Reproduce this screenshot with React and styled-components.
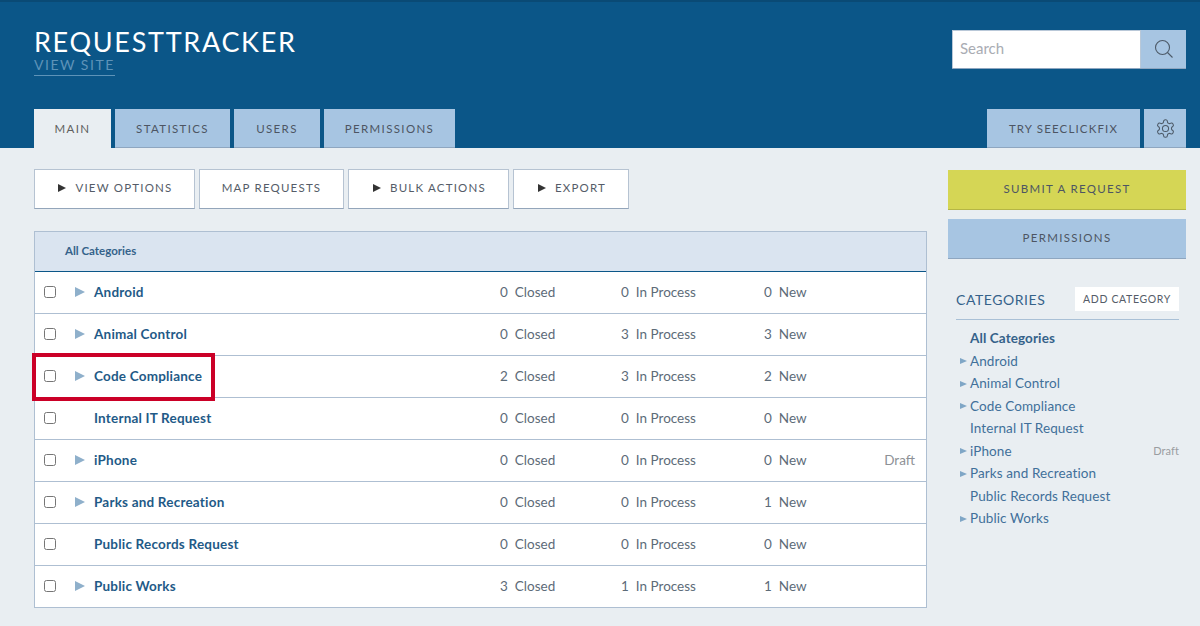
import React from 'react';
import styled, { createGlobalStyle } from 'styled-components';

const GlobalStyle = createGlobalStyle`
  html, body {
    margin: 0;
    padding: 0;
    background: #e9eef2;
    font-family: 'Lato', 'Open Sans', sans-serif;
  }
  * { box-sizing: border-box; }
`;

const Page = styled.div`
  width: 1200px;
  height: 626px;
  overflow: hidden;
`;

const Header = styled.header`
  height: 148px;
  padding: 0 14px 0 34px;
  background: #0b5688;
  border-top: 2px solid #0a4a75;
  display: flex;
  flex-direction: column;
  justify-content: space-between;
`;

const HeaderTop = styled.div`
  display: flex;
  justify-content: space-between;
  align-items: flex-start;
  padding-top: 27px;
`;

const Brand = styled.div`
  display: flex;
  flex-direction: column;
  align-items: flex-start;
`;

const Title = styled.h1`
  margin: 0;
  font-size: 27px;
  line-height: 26px;
  font-weight: 400;
  letter-spacing: 1.7px;
  color: #fff;
`;

const ViewSite = styled.a`
  font-size: 14px;
  line-height: 20px;
  letter-spacing: 1.5px;
  color: #5e93b8;
  border-bottom: 1px solid #5e93b8;
`;

const SearchBox = styled.div`
  width: 234px;
  height: 39px;
  margin-top: 1px;
  display: flex;
  border-bottom: 1px solid #8ea6c0;
`;

const SearchField = styled.div`
  flex: 1;
  padding-left: 7px;
  background: #fff;
  border: 1px solid #b9c8d8;
  border-bottom: none;
  font-size: 15px;
  line-height: 35px;
  color: #a9acb3;
`;

const SearchButton = styled.div`
  width: 45px;
  background: #a7c5e2;
  display: flex;
  align-items: center;
  justify-content: center;
`;

const TabBar = styled.nav`
  display: flex;
  justify-content: space-between;
`;

const TabGroup = styled.div`
  display: flex;
  gap: 4px;
`;

const Tab = styled.div`
  width: ${p => p.$w}px;
  height: 39px;
  display: flex;
  align-items: center;
  justify-content: center;
  font-size: 11.5px;
  letter-spacing: ${p => p.$spacing || 1.35}px;
  color: ${p => (p.$active ? '#5f5f5f' : '#4d5563')};
  background: ${p => (p.$active ? '#e9eef2' : '#a7c5e2')};
  border-bottom: ${p => (p.$active ? 'none' : '1px solid #8ea6c0')};
`;

const Content = styled.main`
  display: flex;
  padding: 21px 14px 0 34px;
`;

const MainColumn = styled.section`
  width: 893px;
`;

const Toolbar = styled.div`
  display: flex;
  gap: 4px;
  margin-bottom: 22px;
`;

const ToolButton = styled.div`
  width: ${p => p.$w}px;
  height: 40px;
  padding: 0 0 3px ${p => (p.$arrow ? 2 : 0)}px;
  display: flex;
  align-items: center;
  justify-content: center;
  gap: 9px;
  background: #fff;
  border: 1px solid #b6c3d2;
  border-bottom-color: #93a5ba;
  font-size: 11.5px;
  letter-spacing: 1.2px;
  color: #555c68;
`;

const ToolArrow = styled.span`
  width: 0;
  height: 0;
  margin-top: 1px;
  border-left: 8px solid #333;
  border-top: 4px solid transparent;
  border-bottom: 4px solid transparent;
`;

const Table = styled.div`
  background: #fff;
  border: 1px solid #aebfd2;
`;

const TableHead = styled.div`
  height: 40px;
  padding-left: 30px;
  background: #dae4f0;
  border-bottom: 1px solid #0b5688;
  font-size: 11.5px;
  font-weight: 700;
  line-height: 38px;
  color: #35628a;
`;

const Row = styled.div`
  position: relative;
  height: 42px;
  padding-bottom: 2px;
  display: flex;
  align-items: center;
  border-bottom: 1px solid #aebfd2;
  font-size: 13.5px;
  &:last-child {
    height: 41px;
    border-bottom: none;
  }
`;

const CheckCell = styled.div`
  width: 40px;
  padding-left: 9px;
  display: flex;
  align-items: center;
`;

const Check = styled.input`
  margin: 0;
  width: 12px;
  height: 12px;
`;

const ArrowCell = styled.div`
  width: 19px;
  display: flex;
  align-items: center;
`;

const RowArrow = styled.span`
  width: 0;
  height: 0;
  border-left: 10px solid #8fb0cb;
  border-top: 5px solid transparent;
  border-bottom: 5px solid transparent;
`;

const Name = styled.div`
  width: 406px;
  font-weight: 700;
  letter-spacing: 0.2px;
  color: #1f5a87;
`;

const Stat = styled.div`
  width: ${p => p.$w}px;
  display: flex;
  gap: 7px;
  color: #5d6b78;
`;

const Draft = styled.div`
  margin-left: auto;
  padding-right: 11px;
  color: #8e9196;
`;

const Highlight = styled.div`
  position: absolute;
  top: -3px;
  left: -3px;
  width: 183px;
  height: 48px;
  border: 4px solid #cb0027;
  pointer-events: none;
`;

const Aside = styled.aside`
  width: 238px;
  margin: 1px 0 0 21px;
`;

const SideButton = styled.div`
  height: 40px;
  margin-bottom: 9px;
  padding-bottom: 2px;
  display: flex;
  align-items: center;
  justify-content: center;
  background: ${p => (p.$yellow ? '#d5d655' : '#a7c5e2')};
  border-bottom: 1px solid ${p => (p.$yellow ? '#b5b645' : '#8ea6c0')};
  font-size: 11.5px;
  letter-spacing: 1.3px;
  color: #4d5563;
`;

const Categories = styled.div`
  margin: 28px 7px 0 8px;
`;

const CategoriesHead = styled.div`
  height: 33px;
  padding-bottom: 8px;
  display: flex;
  justify-content: space-between;
  align-items: center;
  border-bottom: 1px solid #a9c0d6;
`;

const CategoriesTitle = styled.div`
  font-size: 14px;
  letter-spacing: 0.55px;
  color: #35628a;
`;

const AddCategory = styled.div`
  width: 104px;
  height: 24px;
  display: flex;
  align-items: center;
  justify-content: center;
  background: #fff;
  font-size: 10.5px;
  letter-spacing: 0.65px;
  color: #555c68;
`;

const CategoryList = styled.ul`
  list-style: none;
  margin: 6.75px 0 0;
  padding: 0;
`;

const CategoryItem = styled.li`
  height: 22.5px;
  display: flex;
  align-items: center;
  font-size: 13.5px;
  letter-spacing: 0.1px;
  font-weight: ${p => (p.$bold ? 700 : 400)};
  color: ${p => (p.$bold ? '#35628a' : '#41709a')};
`;

const ItemArrow = styled.span`
  width: 14px;
  &::before {
    content: '';
    display: block;
    width: 0;
    height: 0;
    margin: 1px 0 0 4px;
    border-left: 7px solid ${p => (p.$show ? '#7fa6c6' : 'transparent')};
    border-top: 3.5px solid transparent;
    border-bottom: 3.5px solid transparent;
  }
`;

const ItemDraft = styled.span`
  margin-left: auto;
  font-size: 11px;
  color: #9a9da1;
`;

const rows = [
  { name: 'Android', arrow: true, closed: 0, process: 0, fresh: 0 },
  { name: 'Animal Control', arrow: true, closed: 0, process: 3, fresh: 3 },
  { name: 'Code Compliance', arrow: true, closed: 2, process: 3, fresh: 2, marked: true },
  { name: 'Internal IT Request', closed: 0, process: 0, fresh: 0 },
  { name: 'iPhone', arrow: true, closed: 0, process: 0, fresh: 0, draft: true },
  { name: 'Parks and Recreation', arrow: true, closed: 0, process: 0, fresh: 1 },
  { name: 'Public Records Request', closed: 0, process: 0, fresh: 0 },
  { name: 'Public Works', arrow: true, closed: 3, process: 1, fresh: 1 },
];

const App = () => {
  return (
    <Page>
      <GlobalStyle />
      <Header>
        <HeaderTop>
          <Brand>
            <Title>REQUESTTRACKER</Title>
            <ViewSite>VIEW SITE</ViewSite>
          </Brand>
          <SearchBox>
            <SearchField>Search</SearchField>
            <SearchButton>
              <svg width="20" height="20" viewBox="0 0 20 20" fill="none" stroke="#4d5a68" strokeWidth="1.1">
                <circle cx="8.5" cy="8.5" r="7" />
                <path d="M13.5 13.5L18.5 18.5" />
              </svg>
            </SearchButton>
          </SearchBox>
        </HeaderTop>
        <TabBar>
          <TabGroup>
            <Tab $w={77} $active>MAIN</Tab>
            <Tab $w={115}>STATISTICS</Tab>
            <Tab $w={86}>USERS</Tab>
            <Tab $w={131}>PERMISSIONS</Tab>
          </TabGroup>
          <TabGroup>
            <Tab $w={153} $spacing={1.15}>TRY SEECLICKFIX</Tab>
            <Tab $w={42}>
              <svg width="21" height="21" viewBox="0 0 24 24" fill="none" stroke="#4d5a68" strokeWidth="1.2" strokeLinejoin="round">
                <path d="M12.2 2h-.44a2 2 0 0 0-2 2v.18a2 2 0 0 1-1 1.73l-.43.25a2 2 0 0 1-2 0l-.15-.08a2 2 0 0 0-2.73.73l-.22.38a2 2 0 0 0 .73 2.73l.15.1a2 2 0 0 1 1 1.72v.51a2 2 0 0 1-1 1.74l-.15.09a2 2 0 0 0-.73 2.73l.22.38a2 2 0 0 0 2.73.73l.15-.08a2 2 0 0 1 2 0l.43.25a2 2 0 0 1 1 1.73V20a2 2 0 0 0 2 2h.44a2 2 0 0 0 2-2v-.18a2 2 0 0 1 1-1.73l.43-.25a2 2 0 0 1 2 0l.15.08a2 2 0 0 0 2.73-.73l.22-.39a2 2 0 0 0-.73-2.73l-.15-.08a2 2 0 0 1-1-1.74v-.5a2 2 0 0 1 1-1.74l.15-.09a2 2 0 0 0 .73-2.73l-.22-.38a2 2 0 0 0-2.73-.73l-.15.08a2 2 0 0 1-2 0l-.43-.25a2 2 0 0 1-1-1.73V4a2 2 0 0 0-2-2z" />
                <circle cx="12" cy="12" r="3.5" />
              </svg>
            </Tab>
          </TabGroup>
        </TabBar>
      </Header>

      <Content>
        <MainColumn>
          <Toolbar>
            <ToolButton $w={161} $arrow><ToolArrow />VIEW OPTIONS</ToolButton>
            <ToolButton $w={145}>MAP REQUESTS</ToolButton>
            <ToolButton $w={161} $arrow><ToolArrow />BULK ACTIONS</ToolButton>
            <ToolButton $w={116} $arrow><ToolArrow />EXPORT</ToolButton>
          </Toolbar>
          <Table>
            <TableHead>All Categories</TableHead>
            {rows.map(row => (
              <Row key={row.name}>
                <CheckCell><Check type="checkbox" readOnly /></CheckCell>
                <ArrowCell>{row.arrow && <RowArrow />}</ArrowCell>
                <Name>{row.name}</Name>
                <Stat $w={121}><span>{row.closed}</span><span>Closed</span></Stat>
                <Stat $w={143}><span>{row.process}</span><span>In Process</span></Stat>
                <Stat $w={70}><span>{row.fresh}</span><span>New</span></Stat>
                {row.draft && <Draft>Draft</Draft>}
                {row.marked && <Highlight />}
              </Row>
            ))}
          </Table>
        </MainColumn>

        <Aside>
          <SideButton $yellow>SUBMIT A REQUEST</SideButton>
          <SideButton>PERMISSIONS</SideButton>
          <Categories>
            <CategoriesHead>
              <CategoriesTitle>CATEGORIES</CategoriesTitle>
              <AddCategory>ADD CATEGORY</AddCategory>
            </CategoriesHead>
            <CategoryList>
              <CategoryItem $bold><ItemArrow />All Categories</CategoryItem>
              {rows.map(row => (
                <CategoryItem key={row.name}>
                  <ItemArrow $show={row.arrow} />
                  {row.name}
                  {row.draft && <ItemDraft>Draft</ItemDraft>}
                </CategoryItem>
              ))}
            </CategoryList>
          </Categories>
        </Aside>
      </Content>
    </Page>
  );
};

export default App;
